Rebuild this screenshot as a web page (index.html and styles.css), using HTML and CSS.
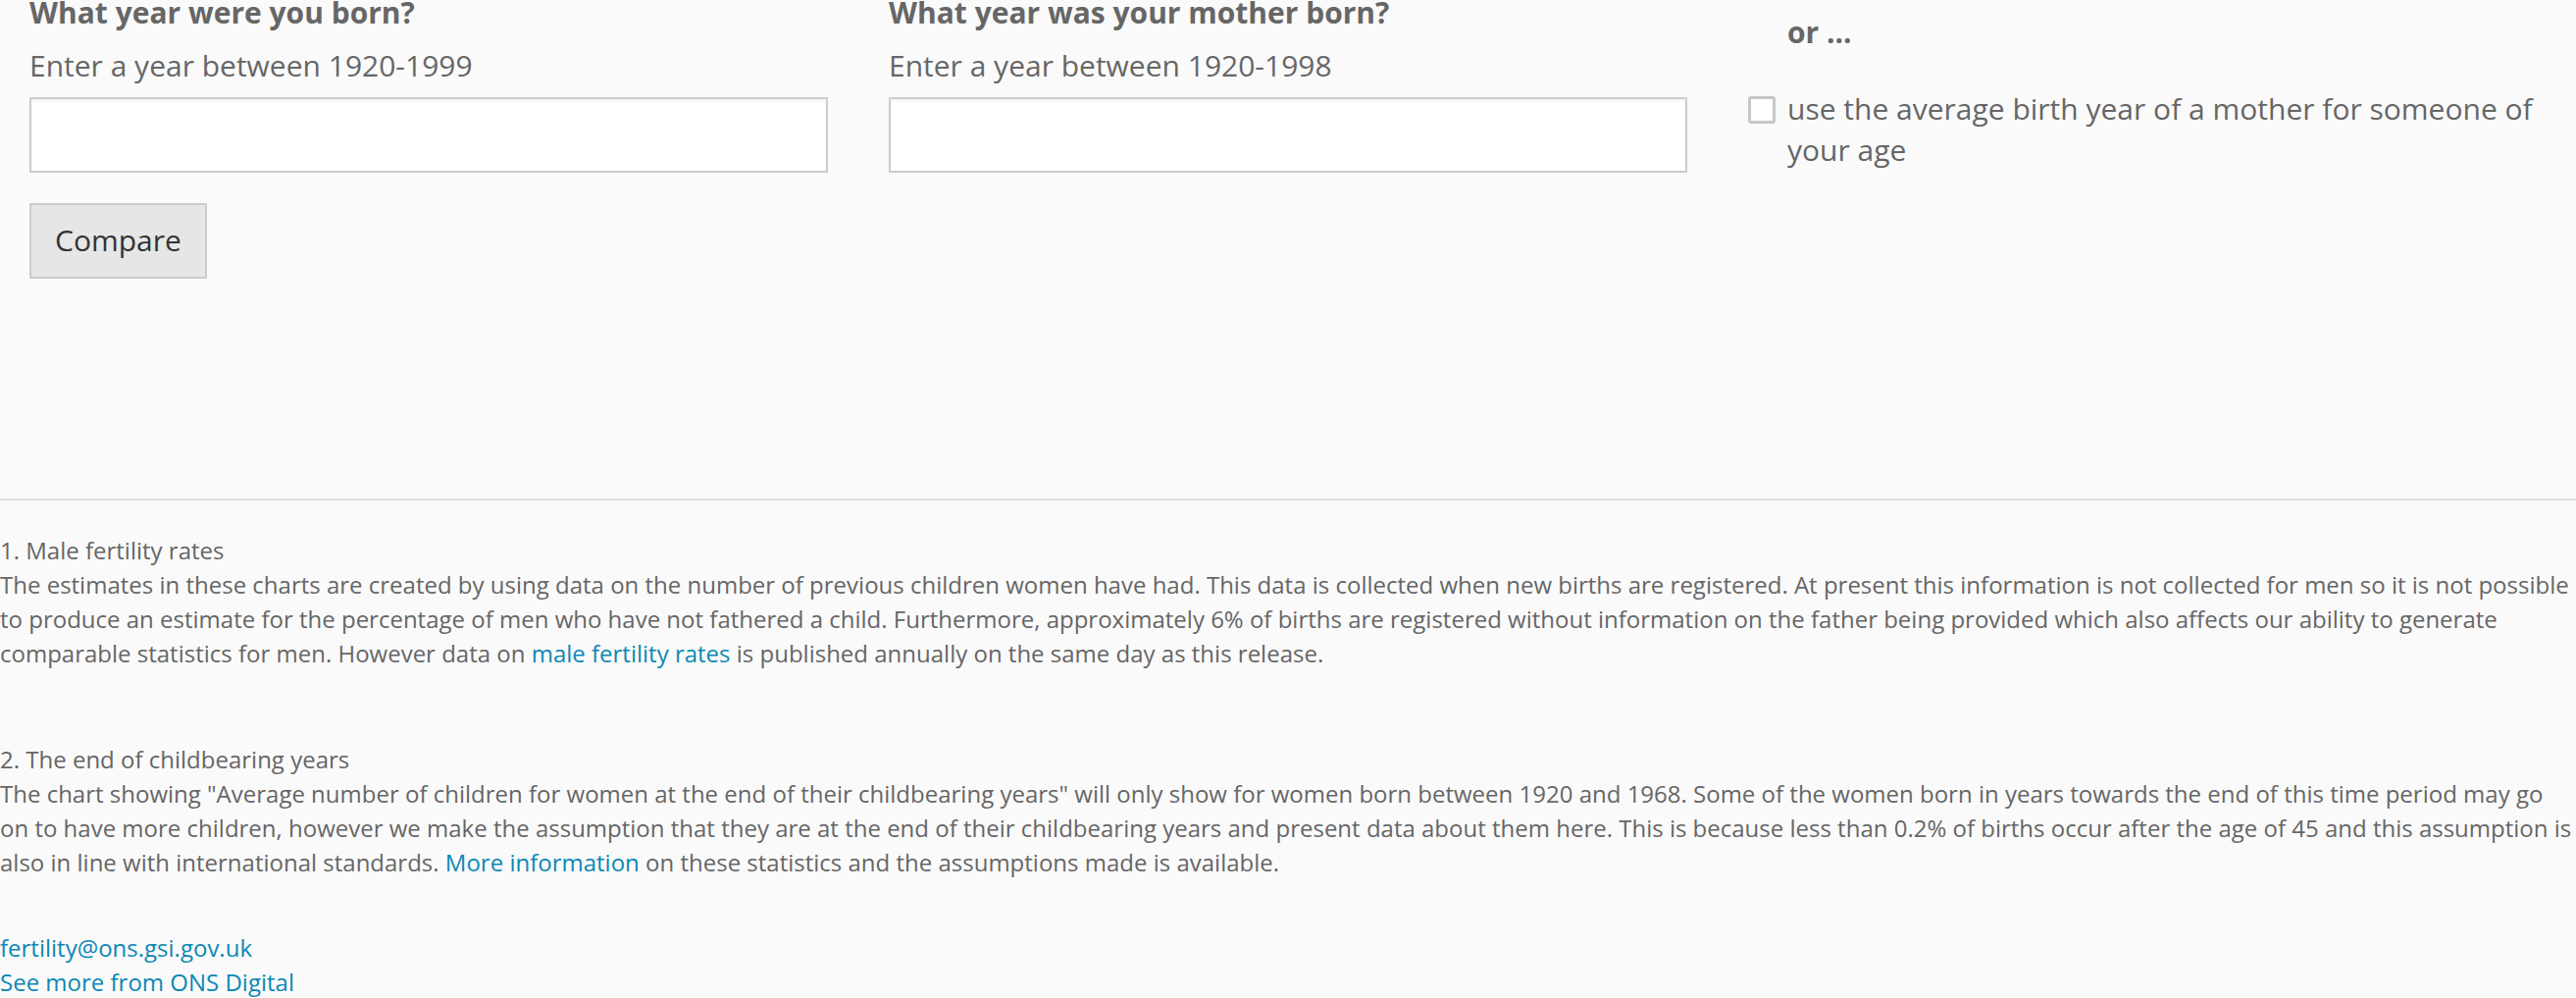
FILE: index.html
```html
<!DOCTYPE html>
<html lang="en">
<head>
<meta charset="utf-8">
<title>Fertility comparison</title>
<link rel="stylesheet" href="styles.css">
</head>
<body>
<main class="page">
  <form class="calculator">
    <div class="field">
      <h2 class="field-title">What year were you born?</h2>
      <label class="field-hint" for="you">Enter a year between 1920-1999</label>
      <input class="year-input" id="you" type="text">
      <button class="compare-btn" type="button">Compare</button>
    </div>
    <div class="field">
      <h2 class="field-title">What year was your mother born?</h2>
      <label class="field-hint" for="mother">Enter a year between 1920-1998</label>
      <input class="year-input" id="mother" type="text">
    </div>
    <div class="field field-alt">
      <h2 class="field-title alt-title">or ...</h2>
      <label class="check-row">
        <span class="checkbox"></span>
        <span class="check-text">use the average birth year of a mother for someone of your age</span>
      </label>
    </div>
  </form>

  <hr class="divider">

  <section class="notes">
    <p class="note">1. Male fertility rates<br>The estimates in these charts are created by using data on the number of previous children women have had. This data is collected when new births are registered. At present this information is not collected for men so it is not possible to produce an estimate for the percentage of men who have not fathered a child. Furthermore, approximately 6% of births are registered without information on the father being provided which also affects our ability to generate comparable statistics for men. However data on <a href="#">male fertility rates</a> is published annually on the same day as this release.</p>
    <p class="note note-last">2. The end of childbearing years<br>The chart showing "Average number of children for women at the end of their childbearing years" will only show for women born between 1920 and 1968. Some of the women born in years towards the end of this time period may go on to have more children, however we make the assumption that they are at the end of their childbearing years and present data about them here. This is because less than 0.2% of births occur after the age of 45 and this assumption is also in line with international standards. <a href="#">More information</a> on these statistics and the assumptions made is available.</p>
    <p class="contact"><a href="#">fertility@ons.gsi.gov.uk</a><br><a href="#">See more from ONS Digital</a></p>
  </section>
</main>
</body>
</html>
```
FILE: styles.css
```css
html, body {
  margin: 0;
  padding: 0;
  background: #fafafa;
}

body {
  font-family: "Open Sans", "Noto Sans", "Liberation Sans", sans-serif;
  color: #666666;
  overflow: hidden;
}

.page {
  margin-top: -8px;
}

.calculator {
  display: grid;
  grid-template-columns: repeat(3, 1fr);
  column-gap: 62px;
  padding: 0 30px;
  margin: 0;
}

.field {
  display: flex;
  flex-direction: column;
  align-items: flex-start;
}

.field-title {
  margin: 0;
  font-size: 30px;
  line-height: 42px;
  font-weight: 700;
  color: #666666;
}

.alt-title {
  margin-top: 20px;
  padding-left: 40px;
}

.field-hint {
  display: block;
  margin-top: 12px;
  font-size: 30px;
  line-height: 42px;
  color: #666666;
}

.year-input {
  box-sizing: border-box;
  width: 100%;
  height: 77px;
  margin-top: 10.6px;
  border: 2px solid #cccccc;
  background: #ffffff;
  box-shadow: inset 0 2px 3px rgba(0, 0, 0, 0.05);
  font-family: inherit;
  font-size: 30px;
  padding: 0 16px;
}

.compare-btn {
  box-sizing: border-box;
  height: 77px;
  margin-top: 31px;
  padding: 0 24px;
  border: 2px solid #cccccc;
  background: #e6e6e6;
  color: #333333;
  font-family: inherit;
  font-size: 30px;
  line-height: 40px;
}

.check-row {
  display: flex;
  align-items: flex-start;
  margin-top: 36px;
}

.checkbox {
  box-sizing: border-box;
  flex: 0 0 28px;
  width: 28px;
  height: 28px;
  margin-top: 8px;
  margin-right: 12px;
  border: 3px solid #c6c6cb;
  border-radius: 3px;
  background: #ffffff;
}

.check-text {
  font-size: 30px;
  line-height: 42px;
  color: #666666;
}

.divider {
  margin: 224px 0 0;
  border: 0;
  border-top: 2px solid #dcdcdc;
  height: 0;
}

.notes {
  padding-top: 33px;
  font-size: 24px;
  line-height: 35px;
}

.note {
  margin: 0 0 73px;
}

.note-last {
  margin-bottom: 52px;
}

.contact {
  margin: 0;
}

.notes a {
  color: #0c88b4;
  text-decoration: none;
}
```
